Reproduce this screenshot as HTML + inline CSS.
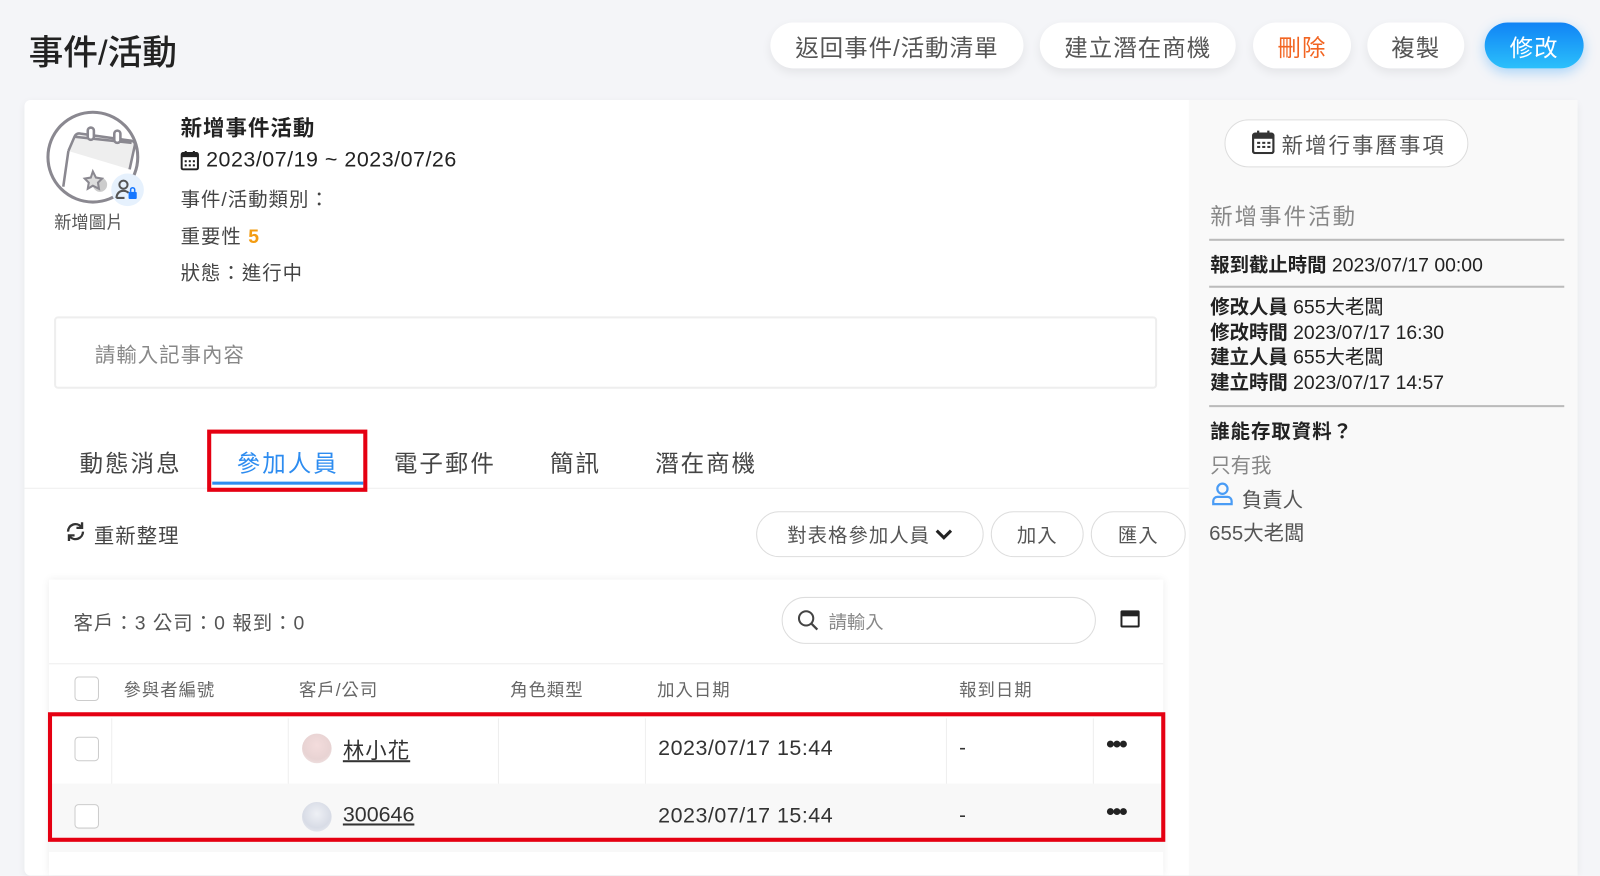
<!DOCTYPE html>
<html><head><meta charset="utf-8"><style>
*{box-sizing:border-box;margin:0;padding:0}
body{width:1600px;height:852px;overflow:hidden;background:#f4f5f8;font-family:"Liberation Sans","Noto Sans CJK TC",sans-serif;color:#333;position:relative}
#w{position:absolute;left:0;top:0;width:1568px;height:835px;transform:scale(1.0204);transform-origin:0 0}
.a{position:absolute;white-space:nowrap}
.btn{position:absolute;height:45px;border-radius:23px;background:#fff;box-shadow:0 4px 10px rgba(0,0,0,.07);font-size:23px;color:#555;display:flex;align-items:center;justify-content:center;letter-spacing:1px}
.pill{position:absolute;border:1px solid #ddd;border-radius:24px;background:#fff;display:flex;align-items:center;justify-content:center;font-size:19px;color:#555;letter-spacing:1px}
.th{position:absolute;top:662px;font-size:17px;color:#666;letter-spacing:1px}
.cb{position:absolute;width:24px;height:24px;border:1px solid #ccc;border-radius:4px;background:#fff}
.vl{position:absolute;width:1px;background:#eee}
</style></head><body><div id="w">
<div class="a" style="left:28px;top:24px;font-size:34px;color:#222;font-weight:500">事件/活動</div>
<div class="btn" style="left:755px;top:22px;width:248px">返回事件/活動清單</div>
<div class="btn" style="left:1019px;top:22px;width:192px">建立潛在商機</div>
<div class="btn" style="left:1228px;top:22px;width:96px;color:#f26522">刪除</div>
<div class="btn" style="left:1340px;top:22px;width:95px">複製</div>
<div class="btn" style="left:1455px;top:22px;width:97px;background:linear-gradient(180deg,#1083f5,#2bc0fb);color:#fff;box-shadow:0 4px 12px rgba(30,150,250,.35)">修改</div>

<div class="a" style="left:24px;top:98px;width:1522px;height:760px;background:#fff;border-radius:6px;box-shadow:0 2px 8px rgba(0,0,0,.05)"></div>
<div class="a" style="left:1165px;top:98px;width:381px;height:760px;background:#f9f9f9"></div>

<svg class="a" style="left:45px;top:108px" width="100" height="100" viewBox="0 0 100 100">
<circle cx="46" cy="46" r="44" fill="#fff" stroke="#8a8890" stroke-width="3"/>
<path d="M22 40 L28 26 Q30 22 34 23 L84 30 Q88 31 87 35 L82 58" fill="#eee" stroke="#8a8890" stroke-width="2.5"/>
<path d="M22 40 L17 75 M28 26 L84 32" fill="none" stroke="#8a8890" stroke-width="2.5"/>
<rect x="41" y="17" width="6" height="12" rx="3" fill="#fff" stroke="#8a8890" stroke-width="2.5"/>
<rect x="67" y="20" width="6" height="12" rx="3" fill="#fff" stroke="#8a8890" stroke-width="2.5"/>
<circle cx="53" cy="73" r="7" fill="#ccc"/>
<path d="M46 60 l3 6 6 1 -4 4 1 6 -6 -3 -5 3 1 -6 -4 -4 6 -1z" fill="#ddd" stroke="#8a8890" stroke-width="2"/>
<circle cx="80" cy="78" r="16" fill="#e6f1fd"/>
<circle cx="76" cy="73" r="4" fill="none" stroke="#555" stroke-width="2"/>
<path d="M69 86 q1 -7 7 -7 q3 0 5 2 M69 86 h8" fill="none" stroke="#555" stroke-width="2"/>
<rect x="81" y="80" width="8" height="7" rx="1" fill="#1677ff"/><path d="M83 80 v-2 a2 2 0 0 1 4 0 v2" fill="none" stroke="#1677ff" stroke-width="1.5"/>
</svg>
<div class="a" style="left:53px;top:204px;font-size:17px;color:#555">新增圖片</div>

<div class="a" style="left:177px;top:110px;font-size:21px;color:#222;font-weight:bold;letter-spacing:1px">新增事件活動</div>
<svg class="a" style="left:177px;top:147px" width="18" height="20" viewBox="0 0 18 20"><rect x="1" y="3" width="16" height="16" rx="1.5" fill="none" stroke="#222" stroke-width="2"/><rect x="1" y="3" width="16" height="4" fill="#222"/><path d="M5 1v4M13 1v4" stroke="#222" stroke-width="2"/><g fill="#222"><rect x="4" y="10" width="2" height="2"/><rect x="8" y="10" width="2" height="2"/><rect x="12" y="10" width="2" height="2"/><rect x="4" y="14" width="2" height="2"/><rect x="8" y="14" width="2" height="2"/><rect x="12" y="14" width="2" height="2"/></g></svg>
<div class="a" style="left:202px;top:145px;font-size:21px;color:#222;letter-spacing:.5px">2023/07/19 ~ 2023/07/26</div>
<div class="a" style="left:177px;top:181px;font-size:19px;color:#444;letter-spacing:1px">事件/活動類別：</div>
<div class="a" style="left:177px;top:217px;font-size:19px;color:#444;letter-spacing:1px">重要性 <b style="color:#f39c12">5</b></div>
<div class="a" style="left:177px;top:253px;font-size:19px;color:#444;letter-spacing:1px">狀態：進行中</div>

<div class="a" style="left:53px;top:310px;width:1081px;height:71px;border:2px solid #eee;border-radius:4px;background:#fff"></div>
<div class="a" style="left:93px;top:332px;font-size:20px;color:#888;letter-spacing:1px">請輸入記事內容</div>

<div class="a" style="left:24px;top:478px;width:1141px;height:1px;background:#eee"></div>
<div class="a" style="left:78px;top:435px;font-size:23px;color:#444;letter-spacing:2px">動態消息</div>
<div class="a" style="left:232px;top:435px;font-size:23px;color:#2d8cf0;letter-spacing:2px">參加人員</div>
<div class="a" style="left:208px;top:472px;width:148px;height:3px;background:#2d8cf0"></div>
<div class="a" style="left:203px;top:421px;width:157px;height:61px;border:4px solid #e50012"></div>
<div class="a" style="left:386px;top:435px;font-size:23px;color:#444;letter-spacing:2px">電子郵件</div>
<div class="a" style="left:539px;top:435px;font-size:23px;color:#444;letter-spacing:2px">簡訊</div>
<div class="a" style="left:642px;top:435px;font-size:23px;color:#444;letter-spacing:2px">潛在商機</div>

<svg class="a" style="left:63px;top:510px" width="22" height="22" viewBox="0 0 24 24"><path d="M20 12a8 8 0 0 1-14 5.3M4 12a8 8 0 0 1 14-5.3" fill="none" stroke="#333" stroke-width="2.5"/><path d="M19 2v6h-6M5 22v-6h6" fill="none" stroke="#333" stroke-width="2.5"/></svg>
<div class="a" style="left:92px;top:509px;font-size:20px;color:#444;letter-spacing:1px">重新整理</div>
<div class="pill" style="left:741px;top:501px;width:223px;height:45px">對表格參加人員 <svg width="18" height="14" viewBox="0 0 18 14" style="margin-left:4px"><path d="M2 3l7 7 7-7" fill="none" stroke="#222" stroke-width="3"/></svg></div>
<div class="pill" style="left:971px;top:501px;width:91px;height:45px">加入</div>
<div class="pill" style="left:1069px;top:501px;width:93px;height:45px">匯入</div>

<div class="a" style="left:48px;top:568px;width:1092px;height:290px;background:#fff;box-shadow:0 0 8px rgba(0,0,0,.08)"></div>
<div class="a" style="left:72px;top:596px;font-size:19px;color:#555;letter-spacing:1px">客戶：3 公司：0 報到：0</div>
<div class="a" style="left:766px;top:585px;width:308px;height:46px;border:1px solid #ddd;border-radius:23px;background:#fff"></div>
<svg class="a" style="left:780px;top:596px" width="24" height="24" viewBox="0 0 24 24"><circle cx="10" cy="10" r="7" fill="none" stroke="#444" stroke-width="2"/><path d="M15 15l6 6" stroke="#444" stroke-width="2.2"/></svg>
<div class="a" style="left:812px;top:596px;font-size:18px;color:#888">請輸入</div>
<svg class="a" style="left:1098px;top:598px" width="19" height="17" viewBox="0 0 19 17"><rect x="1" y="1" width="17" height="15" rx="1" fill="none" stroke="#222" stroke-width="2"/><rect x="1" y="1" width="17" height="5" fill="#222"/></svg>
<div class="a" style="left:48px;top:650px;width:1092px;height:1px;background:#eee"></div>
<div class="cb" style="left:73px;top:663px"></div>
<div class="th" style="left:121px">參與者編號</div>
<div class="th" style="left:293px">客戶/公司</div>
<div class="th" style="left:500px">角色類型</div>
<div class="th" style="left:644px">加入日期</div>
<div class="th" style="left:940px">報到日期</div>

<div class="a" style="left:48px;top:768px;width:1092px;height:67px;background:#f8f8f8"></div>
<div class="vl" style="left:109px;top:704px;height:64px"></div>
<div class="vl" style="left:282px;top:704px;height:64px"></div>
<div class="vl" style="left:488px;top:704px;height:64px"></div>
<div class="vl" style="left:632px;top:704px;height:64px"></div>
<div class="vl" style="left:927px;top:704px;height:64px"></div>
<div class="vl" style="left:1071px;top:704px;height:64px"></div>
<div class="cb" style="left:73px;top:722px"></div>
<div class="cb" style="left:73px;top:788px"></div>
<div class="a" style="left:296px;top:719px;width:29px;height:29px;border-radius:50%;background:radial-gradient(circle at 50% 40%,#f3dcdc,#e8d3d3 60%,#f5eeee)"></div>
<div class="a" style="left:296px;top:786px;width:29px;height:29px;border-radius:50%;background:radial-gradient(circle at 50% 40%,#eef0f5,#d8dce6 60%,#f0f1f4)"></div>
<div class="a" style="left:336px;top:720px;font-size:21px;color:#333;text-decoration:underline;letter-spacing:1px">林小花</div>
<div class="a" style="left:336px;top:787px;font-size:21px;color:#333;text-decoration:underline">300646</div>
<div class="a" style="left:645px;top:722px;font-size:21px;color:#333;letter-spacing:.5px">2023/07/17 15:44</div>
<div class="a" style="left:645px;top:788px;font-size:21px;color:#333;letter-spacing:.5px">2023/07/17 15:44</div>
<div class="a" style="left:940px;top:722px;font-size:20px;color:#333">-</div>
<div class="a" style="left:940px;top:788px;font-size:20px;color:#333">-</div>
<div class="a" style="left:1084px;top:716px;font-size:24px;color:#222;font-weight:bold;letter-spacing:-2px">•••</div>
<div class="a" style="left:1084px;top:782px;font-size:24px;color:#222;font-weight:bold;letter-spacing:-2px">•••</div>
<div class="a" style="left:47px;top:698px;width:1095px;height:127px;border:4px solid #e50012"></div>

<div class="a" style="left:1200px;top:117px;width:239px;height:47px;border:1px solid #ddd;border-radius:24px;background:#fff"></div>
<svg class="a" style="left:1227px;top:127px" width="22" height="24" viewBox="0 0 22 24"><rect x="1" y="4" width="20" height="19" rx="2" fill="none" stroke="#333" stroke-width="2.2"/><rect x="1" y="4" width="20" height="5" fill="#333"/><path d="M6 1v5M16 1v5" stroke="#333" stroke-width="2.2"/><g fill="#333"><rect x="5" y="12" width="3" height="2"/><rect x="10" y="12" width="3" height="2"/><rect x="15" y="12" width="3" height="2"/><rect x="5" y="16" width="3" height="2"/><rect x="10" y="16" width="3" height="2"/><rect x="15" y="16" width="3" height="2"/></g></svg>
<div class="a" style="left:1256px;top:127px;font-size:21px;color:#555;letter-spacing:2px">新增行事曆事項</div>
<div class="a" style="left:1186px;top:195px;font-size:22px;color:#888;letter-spacing:2px">新增事件活動</div>
<div class="a" style="left:1185px;top:234px;width:348px;height:2px;background:#bbb"></div>
<div class="a" style="left:1186px;top:245px;font-size:19px;color:#222"><b>報到截止時間</b> 2023/07/17 00:00</div>
<div class="a" style="left:1185px;top:280px;width:348px;height:2px;background:#bbb"></div>
<div class="a" style="left:1186px;top:290px;font-size:19px;color:#222;line-height:24.5px"><b>修改人員</b> 655大老闆<br><b>修改時間</b> 2023/07/17 16:30<br><b>建立人員</b> 655大老闆<br><b>建立時間</b> 2023/07/17 14:57</div>
<div class="a" style="left:1185px;top:397px;width:348px;height:2px;background:#bbb"></div>
<div class="a" style="left:1186px;top:408px;font-size:19px;color:#222;font-weight:bold;letter-spacing:1px">誰能存取資料？</div>
<div class="a" style="left:1186px;top:440px;font-size:20px;color:#888">只有我</div>
<svg class="a" style="left:1186px;top:472px" width="24" height="24" viewBox="0 0 24 24"><circle cx="12" cy="7" r="5" fill="none" stroke="#4a9cf5" stroke-width="2.2"/><path d="M3 22v-3a4 4 0 0 1 4-4h10a4 4 0 0 1 4 4v3z" fill="none" stroke="#4a9cf5" stroke-width="2.2"/></svg>
<div class="a" style="left:1217px;top:474px;font-size:20px;color:#555">負責人</div>
<div class="a" style="left:1185px;top:506px;font-size:20px;color:#555">655大老闆</div>
</div></body></html>
